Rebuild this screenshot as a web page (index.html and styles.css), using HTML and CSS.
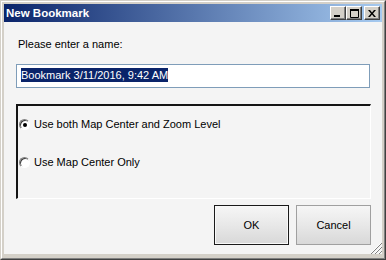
FILE: index.html
```html
<!DOCTYPE html>
<html lang="en">
<head>
    <meta charset="UTF-8">
    <title>New Bookmark</title>
    <link rel="stylesheet" href="styles.css">
</head>
<body>
    <div class="window">
        <div class="frame">
            <div class="titlebar">
                <span class="title">New Bookmark</span>
                <div class="caption-buttons">
                    <div class="cap-btn">
                        <svg width="8" height="7" viewBox="0 0 8 7"><rect x="0" y="5" width="6" height="2" fill="#000"/></svg>
                    </div>
                    <div class="cap-btn">
                        <svg width="9" height="9" viewBox="0 0 9 9"><path d="M0.5 1.5h8v7h-8z" fill="none" stroke="#000"/><rect x="0" y="0" width="9" height="2" fill="#000"/></svg>
                    </div>
                    <div class="cap-btn close">
                        <svg width="8" height="7" viewBox="0 0 8 7"><path d="M0 0h2l2 2.5 2-2.5h2l-3 3.5 3 3.5h-2l-2-2.5-2 2.5h-2l3-3.5z" fill="#000"/></svg>
                    </div>
                </div>
            </div>

            <div class="client">
                <div class="prompt">Please enter a name:</div>

                <div class="textbox">
                    <span class="selection">Bookmark 3/11/2016, 9:42 AM</span>
                </div>

                <div class="options">
                    <div class="option">
                        <span class="radio checked"></span>
                        <span>Use both Map Center and Zoom Level</span>
                    </div>
                    <div class="option">
                        <span class="radio"></span>
                        <span>Use Map Center Only</span>
                    </div>
                </div>

                <div class="actions">
                    <div class="btn default">OK</div>
                    <div class="btn">Cancel</div>
                </div>

                <svg class="grip" width="12" height="12" viewBox="0 0 12 12">
                    <path d="M11 1L1 11M11 5L5 11M11 9L9 11" stroke="#fff" stroke-width="1"/>
                    <path d="M12 1L1 12M12 5L5 12M12 9L9 12" stroke="#808080" stroke-width="1"/>
                </svg>
            </div>
        </div>
    </div>
</body>
</html>
```

FILE: styles.css
```css
* {
    margin: 0;
    padding: 0;
    box-sizing: border-box;
}

body {
    font-family: 'Liberation Sans', Arial, sans-serif;
    font-size: 11px;
    color: #000;
    background: #fff;
}

.window {
    width: 386px;
    height: 260px;
    border: 1px solid;
    border-color: #d4d0c8 #404040 #404040 #d4d0c8;
    background: #d4d0c8;
}

.frame {
    height: 100%;
    border: 1px solid;
    border-color: #fff #808080 #808080 #fff;
    padding: 2px 2px 4px 2px;
    display: flex;
    flex-direction: column;
}

/* title bar */
.titlebar {
    height: 18px;
    flex-shrink: 0;
    display: flex;
    align-items: center;
    justify-content: space-between;
    padding: 0 2px 0 2px;
    background: linear-gradient(90deg, #0a246a 0%, #a6caf0 100%);
}

.title {
    color: #fff;
    font-weight: 700;
    font-size: 11.5px;
}

.caption-buttons {
    display: flex;
    gap: 0;
}

.cap-btn {
    width: 16px;
    height: 14px;
    background: #d4d0c8;
    border: 1px solid;
    border-color: #fff #404040 #404040 #fff;
    box-shadow: inset -1px -1px 0 #808080;
    display: flex;
    align-items: center;
    justify-content: center;
}

.cap-btn.close {
    margin-left: 2px;
}

/* client area */
.client {
    flex: 1;
    position: relative;
    background: #f4f4f4;
    padding: 16px 11px 0 12px;
    display: flex;
    flex-direction: column;
}

.prompt {
    line-height: 13px;
    padding-left: 2px;
}

.textbox {
    margin-top: 13px;
    margin-right: 1px;
    height: 24px;
    border: 1px solid #7f9db9;
    background: #fff;
    padding: 3px 0 0 4px;
}

.selection {
    display: inline-block;
    line-height: 14px;
    background: #0a246a;
    color: #fff;
}

.options {
    margin-top: 16px;
    height: 95px;
    border-top: 2px solid #141414;
    border-left: 2px solid #141414;
    border-right: 1px solid #fff;
    border-bottom: 1px solid #fff;
    padding: 10px 0 0 1px;
    display: flex;
    flex-direction: column;
    gap: 22px;
}

.option {
    display: flex;
    align-items: center;
    gap: 4px;
    height: 16px;
}

.radio {
    width: 11px;
    height: 11px;
    border-radius: 50%;
    border: 1px solid;
    border-color: #808080 #fff #fff #808080;
    background: #fff;
    box-shadow: inset 1px 1px 0 #404040;
    position: relative;
}

.radio.checked::after {
    content: '';
    position: absolute;
    left: 3px;
    top: 3px;
    width: 4px;
    height: 4px;
    border-radius: 50%;
    background: #000;
}

.actions {
    margin-top: 6px;
    display: flex;
    justify-content: flex-end;
    gap: 7px;
}

.btn {
    width: 75px;
    height: 40px;
    display: flex;
    align-items: center;
    justify-content: center;
    border: 1px solid #a0a0a0;
    background: linear-gradient(180deg, #f6f6f6 0%, #e8e8e8 50%, #d8d8d8 100%);
}

.btn.default {
    border-color: #1a1a1a;
    box-shadow: inset 0 0 0 1px #f8f8f8;
}

.grip {
    position: absolute;
    right: 0;
    bottom: 0;
}
```
